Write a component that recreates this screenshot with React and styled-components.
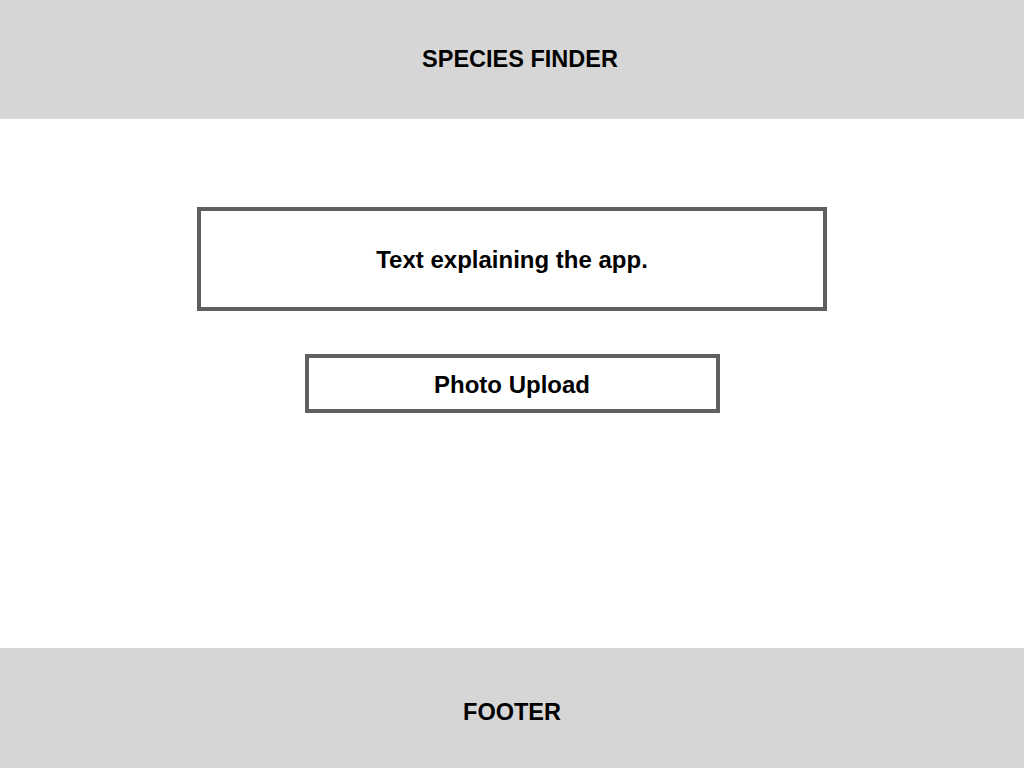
import styled, { createGlobalStyle } from 'styled-components'

const GlobalStyle = createGlobalStyle`
    html, body, #root {
        margin: 0;
        height: 100%;
    }
    body {
        font-family: "Liberation Sans", Arial, sans-serif;
        background: #fff;
        color: #000;
    }
`

const Pagina = styled.div`
    display: flex;
    flex-direction: column;
    height: 768px;
`

const Barra = styled.div`
    background-color: #d6d6d6;
    height: ${props => props.$altura}px;
    display: flex;
    align-items: center;
    justify-content: center;
    padding-top: ${props => props.$deslocamento || 0}px;
    padding-left: ${props => props.$recuo || 0}px;
    box-sizing: border-box;
    flex-shrink: 0;
`

const Titulo = styled.h1`
    margin: 0;
    font-size: 23.5px;
    font-weight: 700;
`

const Conteudo = styled.main`
    flex: 1;
    display: flex;
    flex-direction: column;
    align-items: center;
    padding-top: 88px;
    gap: 43px;
`

const Caixa = styled.div`
    box-sizing: border-box;
    width: ${props => props.$largura}px;
    height: ${props => props.$altura}px;
    border: 4px solid #5f5f5f;
    display: flex;
    align-items: center;
    justify-content: center;
    font-size: 24px;
    font-weight: 700;
    padding-top: 2px;
`

function App() {
    return (
        <Pagina>
            <GlobalStyle />
            <Barra $altura={119} $recuo={16}>
                <Titulo>SPECIES FINDER</Titulo>
            </Barra>
            <Conteudo>
                <Caixa $largura={630} $altura={104}>Text explaining the app.</Caixa>
                <Caixa $largura={415} $altura={59}>Photo Upload</Caixa>
            </Conteudo>
            <Barra $altura={120} $deslocamento={8}>
                <Titulo>FOOTER</Titulo>
            </Barra>
        </Pagina>
    )
}

export default App
